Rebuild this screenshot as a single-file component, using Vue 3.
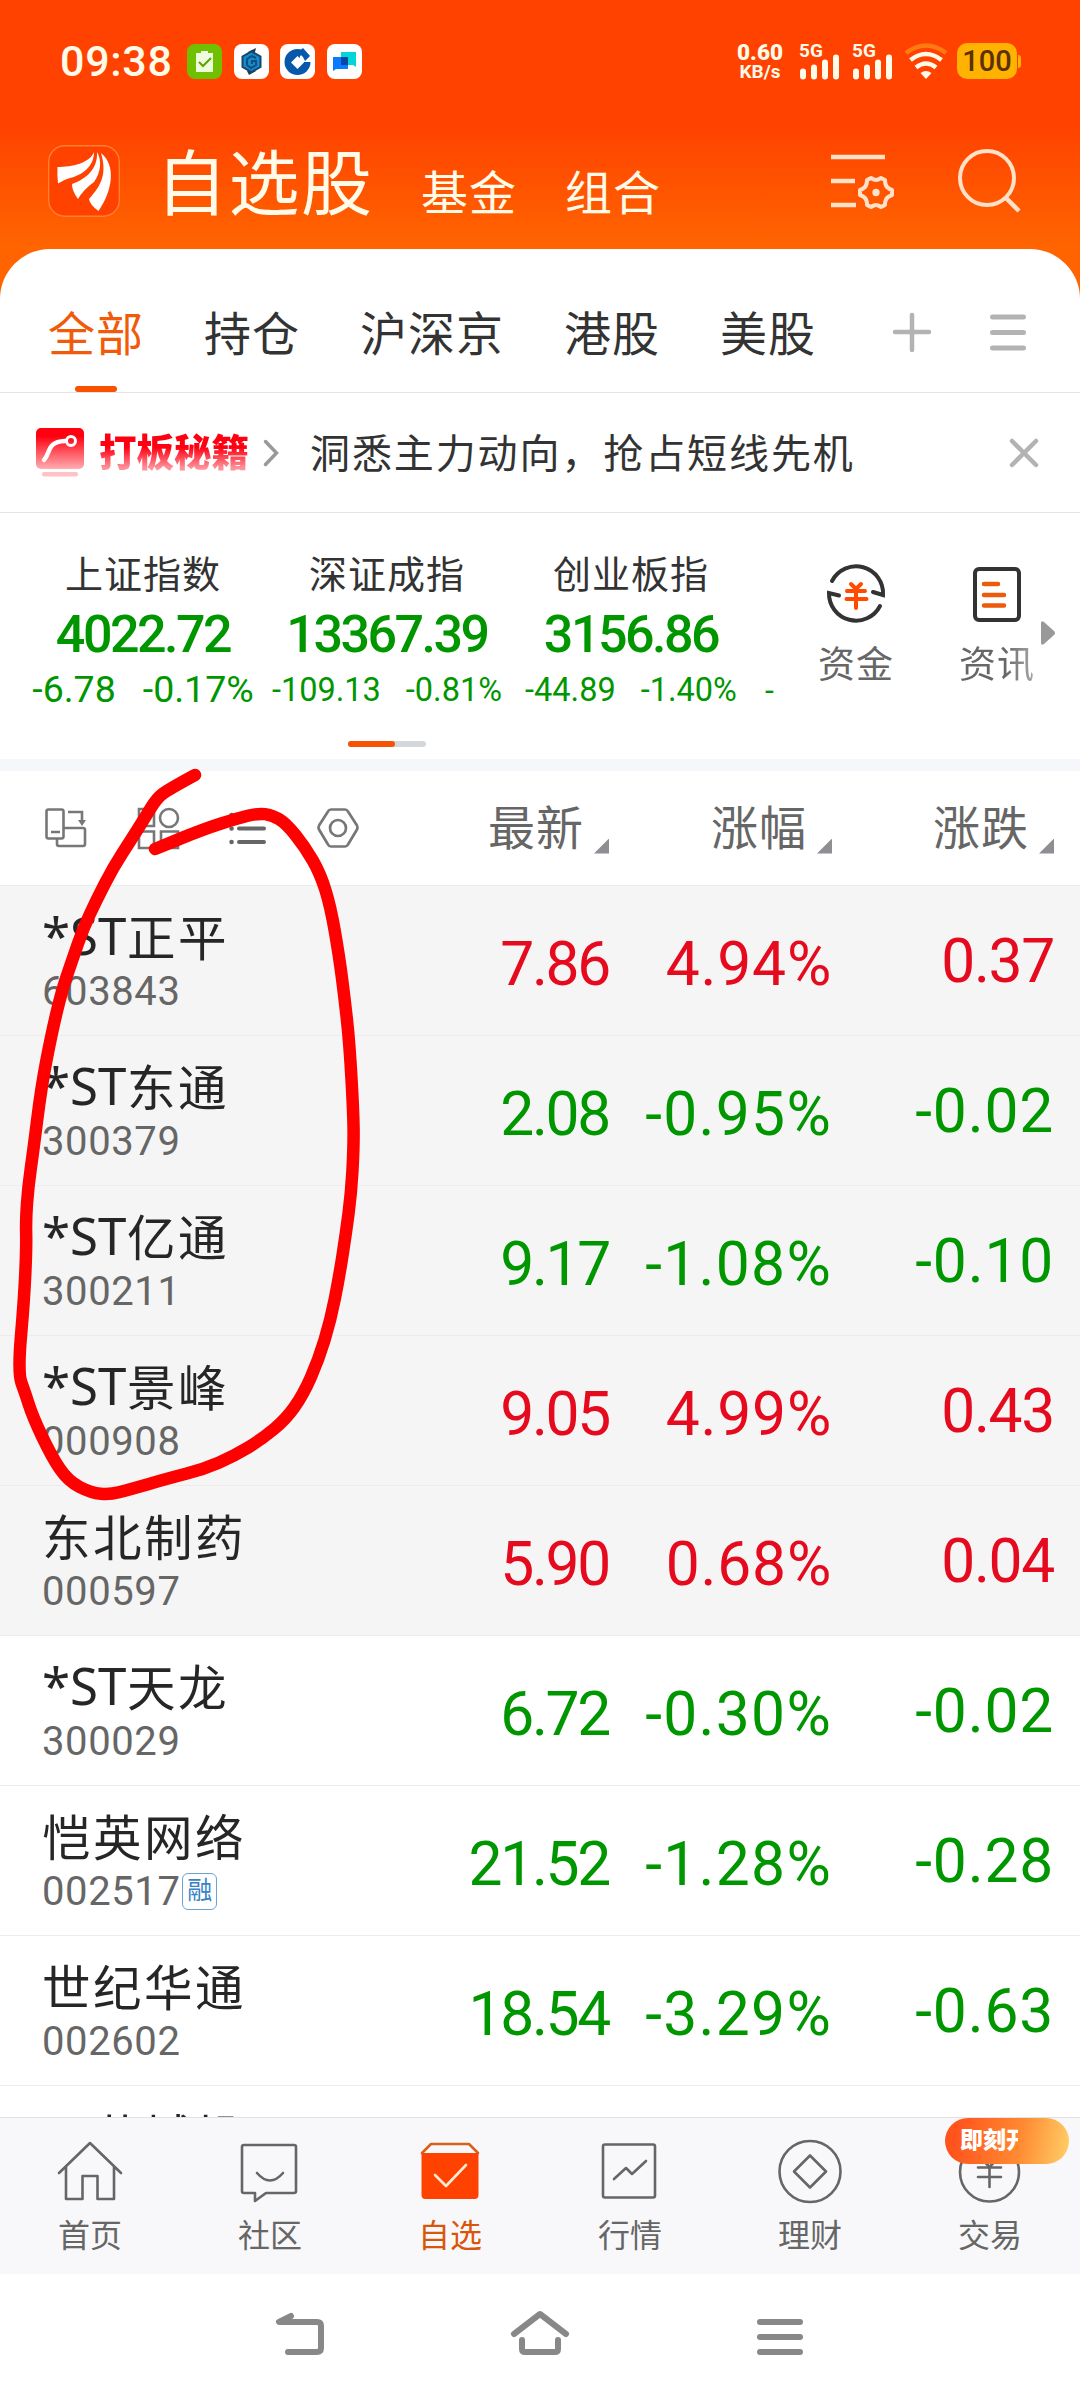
<script setup>
  import { ref, computed } from 'vue';

  const headerTabs = ['基金', '组合'];
  const groups = ['全部', '持仓', '沪深京', '港股', '美股'];
  const activeGroup = ref('全部');

  const indices = [
    { name: '上证指数', value: '4022.72', change: '-6.78', percent: '-0.17%', large: true },
    { name: '深证成指', value: '13367.39', change: '-109.13', percent: '-0.81%' },
    { name: '创业板指', value: '3156.86', change: '-44.89', percent: '-1.40%' }
  ];

  const columns = ['最新', '涨幅', '涨跌'];

  const stocks = [
    { st: true, name: '正平', code: '603843', price: '7.86', percent: '4.94%', change: '0.37', pinned: true },
    { st: true, name: '东通', code: '300379', price: '2.08', percent: '-0.95%', change: '-0.02', pinned: true },
    { st: true, name: '亿通', code: '300211', price: '9.17', percent: '-1.08%', change: '-0.10', pinned: true },
    { st: true, name: '景峰', code: '000908', price: '9.05', percent: '4.99%', change: '0.43', pinned: true },
    { name: '东北制药', code: '000597', price: '5.90', percent: '0.68%', change: '0.04', pinned: true },
    { st: true, name: '天龙', code: '300029', price: '6.72', percent: '-0.30%', change: '-0.02' },
    { name: '恺英网络', code: '002517', price: '21.52', percent: '-1.28%', change: '-0.28', tag: '融' },
    { name: '世纪华通', code: '002602', price: '18.54', percent: '-3.29%', change: '-0.63' },
    { name: '西藏城投' }
  ];

  const trend = (stock) => (stock.change?.startsWith('-') ? 'down' : 'up');

  const navItems = [
    { key: 'home', label: '首页' },
    { key: 'chat', label: '社区' },
    { key: 'watch', label: '自选' },
    { key: 'market', label: '行情' },
    { key: 'wealth', label: '理财' },
    { key: 'trade', label: '交易' }
  ];
  const activeNav = ref('watch');

  // Hand drawn marker, smoothed through the midpoints
  const marker = [
    [195, 775], [168.7, 789.3], [156.7, 798.3], [144.6, 818.3], [130.9, 840], [113.6, 866.7], [96.4, 900],
    [82.6, 930], [72.3, 960], [62, 990], [51.7, 1033], [41.3, 1087], [33.4, 1150], [28.2, 1186.7],
    [25.8, 1220], [26.5, 1246.7], [24.1, 1300], [17.8, 1373], [25.2, 1393], [32.7, 1416.7], [51.7, 1456.7],
    [68, 1481], [91.3, 1493], [110.2, 1494.6], [127.4, 1490], [168.7, 1478.3], [203.2, 1469.3],
    [234.2, 1456], [261.7, 1439.3], [285.8, 1419.3], [303, 1395], [318.5, 1360], [330.6, 1320],
    [339.2, 1276.7], [346, 1233], [351.2, 1193], [353.6, 1150], [353.6, 1117], [349.5, 1043],
    [344.4, 996.7], [339.2, 956.7], [330.6, 906.7], [320.2, 873.3], [304.8, 846.7], [286, 823.3],
    [272, 815], [258, 813.3], [237.6, 818.3], [203.2, 829.3], [155, 849]
  ];
  const markerPath = computed(() => {
    let d = `M${marker[0]}`;
    for (let i = 1; i < marker.length - 1; i++) {
      const [x, y] = marker[i];
      const [nx, ny] = marker[i + 1];
      d += ` Q${x} ${y} ${(x + nx) / 2} ${(y + ny) / 2}`;
    }
    return `${d} L${marker[marker.length - 1]}`;
  });
</script>

<template>
  <div class="phone">
    <div class="hero">
      <div class="status">
        <span class="clock">09:38</span>
        <div class="apps">
          <svg class="app" viewBox="0 0 35 35">
            <rect width="35" height="35" rx="8" fill="#6fc000" />
            <path d="M9 9h5V7h7v2h5v19H9z" fill="#eefbdc" />
            <path d="M12 18l4 4 8-8" fill="none" stroke="#5da300" stroke-width="2" />
          </svg>
          <svg class="app" viewBox="0 0 35 35">
            <rect width="35" height="35" rx="8" fill="#fff" />
            <path d="M14 8l8-4-1 4zM13 27l2 4 7-4z" fill="#263846" />
            <path d="M17.500 7.500l9 5v10.500l-9 5-9-5V12.500z" fill="#128bd0" stroke="#174568" stroke-width="2" />
            <path d="M22 14l-4-2-5 3v6l4 3 5-3v-4h-4v3" fill="none" stroke="#124e78" stroke-width="2" />
          </svg>
          <svg class="app" viewBox="0 0 35 35">
            <rect width="35" height="35" rx="8" fill="#fff" />
            <circle cx="17.500" cy="18" r="13" fill="#0757ab" />
            <path d="M17.500 12l6.500 6.500-6.500 6.500-6.500-6.500z" fill="#fff" />
            <path d="M19 18h12v-5l-5-5-6 4z" fill="#fff" />
            <path d="M18 8l5-4 7 8-5 5-2-4z" fill="#0757ab" />
          </svg>
          <svg class="app" viewBox="0 0 35 35">
            <rect width="35" height="35" rx="8" fill="#fff" />
            <path d="M14 8h15v15l-3-2H14z" fill="#00d5d8" />
            <path d="M6 13h15v12H9l-3 2z" fill="#087cff" />
            <path d="M14 13h7v8h-7z" fill="#0547a8" />
          </svg>
        </div>
        <div class="speed"><b>0.60</b><i>KB/s</i></div>
        <div v-for="n in 2" :key="n" class="signal">
          <b>5G</b>
          <svg viewBox="0 0 40 26" width="40" height="26">
            <path d="M4 17.500v5M15 13.500v9M26 8.500v14M37 3.500v19" stroke="#fffbe8" stroke-width="6" stroke-linecap="round" />
          </svg>
        </div>
        <svg class="wifi" viewBox="0 0 44 38" width="44" height="38">
          <g fill="none" stroke-width="4.500">
            <path d="M2 11q20-15 40 0" stroke="#ff7a10" />
            <path d="M6.500 18q15.500-12 31 0M12 25.500q10-8 20 0" stroke="#fffbe8" />
          </g>
          <path d="M16.500 31q5.500-4 11 0L22 37z" fill="#fffbe8" />
        </svg>
        <div class="battery">100</div>
      </div>

      <header class="header">
        <svg class="logo" viewBox="0 0 72 72">
          <rect x=".7" y=".7" width="70.600" height="70.600" rx="16" fill="#ff4200" stroke="#ff8030" stroke-width="1.400" />
          <g fill="#fff">
            <path d="M9.500 22C24 22 42 18 46 7C46 22 34 30 22 33Q15 35 10 38.500Q9 30 9.500 22z" />
            <path d="M49 7C54 15 53 27 46 37Q35 45 30 54Q24 46 24 39C38 34 50 24 49 7z" />
            <path d="M53 8C68 20 65 45 50.500 66Q42 60 41 54C54 40 59 28 53 8z" />
          </g>
        </svg>
        <h1>自选股</h1>
        <span v-for="tab in headerTabs" :key="tab" class="header-tab">{{ tab }}</span>
        <svg class="list-setting" viewBox="0 0 56 56" width="56" height="56">
          <path d="M1 5h54M1 29h24M1 53h25" fill="none" stroke="#ffe0c8" stroke-width="4.500" />
          <path
            d="M41 26Q44 28 46 28Q48 28 51 26L55 28Q55 33 57 35Q59 37 62 38V43Q59 44 57 46Q55 48 55 53L51 55Q48 53 46 53Q44 53 41 55L37 53Q37 48 35 46Q33 44 30 43V38Q33 37 35 35Q37 33 37 28z"
            fill="none" stroke="#ffe0c8" stroke-width="4" stroke-linejoin="round"
          />
          <circle cx="46" cy="40.500" r="3.700" fill="#ffe0c8" />
        </svg>
        <svg class="search" viewBox="0 0 66 66" width="66" height="66">
          <circle cx="30" cy="30" r="27" fill="none" stroke="#ffe0c8" stroke-width="4" />
          <path d="M48 49L62 63" stroke="#ffe0c8" stroke-width="4.500" />
        </svg>
      </header>
    </div>

    <main class="sheet">
      <nav class="groups">
        <span v-for="group in groups" :key="group" class="group" :class="{ active: group === activeGroup }">{{ group }}</span>
        <svg class="plus" viewBox="0 0 40 40" width="40" height="40">
          <path d="M20 3v35M3 20h34" stroke="#b3b3b3" stroke-width="4.500" stroke-linecap="round" />
        </svg>
        <svg class="menu" viewBox="0 0 36 40" width="36" height="40">
          <path d="M2.500 5h31M2.500 20.500h31M2.500 36h31" stroke="#b3b3b3" stroke-width="5" stroke-linecap="round" />
        </svg>
      </nav>

      <div class="banner">
        <svg class="banner-icon" viewBox="0 0 48 49" width="48" height="49">
          <defs>
            <linearGradient id="redFade" x1="0" y1="0" x2="0" y2="1">
              <stop offset=".2" stop-color="#ff0010" />
              <stop offset="1" stop-color="#ffadb2" />
            </linearGradient>
          </defs>
          <rect width="48" height="41" rx="5" fill="url(#redFade)" />
          <path d="M8 32C15 25 10 14 29 13" fill="none" stroke="#fff" stroke-width="4.500" stroke-linecap="round" />
          <circle cx="35" cy="13" r="4.500" fill="none" stroke="#fff" stroke-width="3" />
          <rect x="6" y="44" width="36" height="4.500" rx="2" fill="#ffc2c5" />
        </svg>
        <b class="banner-brand">打板秘籍</b>
        <svg class="chevron" viewBox="0 0 16 30" width="16" height="30">
          <path d="M2.500 3.500L13.500 15L2.500 26.500" fill="none" stroke="#999" stroke-width="3.500" stroke-linecap="round" />
        </svg>
        <span class="banner-text">洞悉主力动向，抢占短线先机</span>
        <svg class="close" viewBox="0 0 30 30" width="30" height="30">
          <path d="M3 3l24 24M27 3L3 27" stroke="#b3b3b3" stroke-width="4.500" stroke-linecap="round" />
        </svg>
      </div>

      <section class="overview">
        <div class="overview-main">
          <div class="indices">
            <div v-for="item in indices" :key="item.name" class="index">
              <span class="index-name">{{ item.name }}</span>
              <b class="index-value">{{ item.value }}</b>
              <div class="index-change" :class="{ large: item.large }">
                <span>{{ item.change }}</span><span>{{ item.percent }}</span>
              </div>
            </div>
            <span class="next-index">-</span>
          </div>
          <div class="tool">
            <svg viewBox="0 0 60 60" width="60" height="60">
              <g fill="none" stroke="#333" stroke-width="4" stroke-linecap="round">
                <path d="M6 17A27 27 0 0 1 57 31L47 28M54 42A27 27 0 0 1 3 29L13 31.500" />
              </g>
              <path d="M25 20l5 5 5-5M30 25v19M21 27h18M20.500 35h20" fill="none" stroke="#ff4a00" stroke-width="4" stroke-linecap="round" />
            </svg>
            <span>资金</span>
          </div>
          <div class="tool news">
            <svg viewBox="0 0 60 60" width="60" height="60">
              <rect x="8" y="5" width="44" height="51" rx="4" fill="none" stroke="#333" stroke-width="4" />
              <path d="M17 20h14M17 31h20M17 41.500h20" stroke="#ec5a0c" stroke-width="4.500" stroke-linecap="round" />
            </svg>
            <span>资讯</span>
          </div>
          <svg class="more" viewBox="0 0 16 26" width="16" height="26">
            <path d="M1 3q0-3 3-1l10 9q2 2 0 4L4 24q-3 2-3-1z" fill="#999" />
          </svg>
        </div>
        <div class="pager"><span></span></div>
      </section>

      <section class="table">
        <div class="row table-head">
          <div class="view-icons">
            <svg viewBox="0 0 42 40" width="42" height="40">
              <g fill="none" stroke="#777" stroke-width="2.600">
                <rect x="1.500" y="1.500" width="17" height="29" rx="2" />
                <path d="M12 31v5q0 2 2 2h24q2 0 2-2V22q0-2-2-2H19M23 4h14v10M6 24h9" />
              </g>
              <path d="M33 12h8l-4 6z" fill="#777" />
            </svg>
            <svg viewBox="0 0 42 42" width="42" height="42">
              <g fill="none" stroke="#777" stroke-width="2.600">
                <path d="M2 2h15v17H2zM2 24.500h15V41H2zM24 24.500h17V41H24z" />
                <circle cx="32" cy="11" r="9" />
              </g>
            </svg>
            <svg viewBox="0 0 38 34" width="38" height="34">
              <path d="M10 4h25M10 17.500h25M10 31h25" stroke="#666" stroke-width="4" stroke-linecap="round" />
              <path d="M2.500 4h.1M2.500 17.500h.1M2.500 31h.1" stroke="#666" stroke-width="4.500" stroke-linecap="round" />
            </svg>
            <svg viewBox="0 0 42 40" width="42" height="40">
              <g fill="none" stroke="#777" stroke-width="2.700" stroke-linejoin="round">
                <path d="M14 1.500h14q2 0 3 2l9 14q1 2 0 4l-9 15q-1 2-3 2H14q-2 0-3-2l-9-15q-1-2 0-4l9-14q1-2 3-2z" />
                <circle cx="21" cy="20" r="8" />
              </g>
            </svg>
          </div>
          <span v-for="column in columns" :key="column" class="column"><span>{{ column }}</span><i class="sort"></i></span>
        </div>

        <div v-for="stock in stocks" :key="stock.name" class="row stock" :class="[trend(stock), { pinned: stock.pinned }]">
          <div class="stock-info">
            <div class="stock-name"><span v-if="stock.st" class="st">*ST</span>{{ stock.name }}</div>
            <div class="stock-code">{{ stock.code }}<span v-if="stock.tag" class="tag">{{ stock.tag }}</span></div>
          </div>
          <span class="number price">{{ stock.price }}</span>
          <span class="number percent">{{ stock.percent }}</span>
          <span class="number change">{{ stock.change }}</span>
        </div>
      </section>
    </main>

    <nav class="bottom-nav">
      <div v-for="item in navItems" :key="item.key" class="nav-item" :class="{ active: item.key === activeNav }">
        <svg viewBox="0 0 66 66" width="66" height="66" fill="none" stroke="#666" stroke-width="2.600" stroke-linecap="round" stroke-linejoin="round">
          <path v-if="item.key === 'home'" d="M2 34L33 4l31 30M9 28v32h16.500V37h15v23H57V28" />
          <template v-else-if="item.key === 'chat'">
            <path d="M7 6h50q2 0 2 2v44q0 2-2 2H29l-11 8V54H7q-2 0-2-2V8q0-2 2-2z" />
            <path d="M20 34q13 15 26 0" />
          </template>
          <template v-else-if="item.key === 'watch'">
            <path d="M5 14L14 5h38l9 9" stroke="#d8601c" />
            <path d="M4.500 14h57v42q0 4-4 4h-49q-4 0-4-4z" fill="#ff4200" stroke="none" />
            <path d="M18 36l11 11 20-21" stroke="#ffecd0" />
          </template>
          <template v-else-if="item.key === 'market'">
            <rect x="6" y="5.500" width="52" height="53" rx="2" />
            <path d="M17 40l12-11 6 6 14-13" />
          </template>
          <template v-else-if="item.key === 'wealth'">
            <circle cx="33" cy="32.500" r="30.500" />
            <path d="M33 16.500l16 16-16 16-16-16z" />
          </template>
          <template v-else>
            <circle cx="32.500" cy="33" r="29.500" />
            <path d="M22 17l10.500 11L43 17M32.500 28v20M21 28.500h23M21 38h23" />
          </template>
        </svg>
        <span>{{ item.label }}</span>
        <div v-if="item.key === 'trade'" class="promo"><span>即刻开</span></div>
      </div>
    </nav>

    <div class="system-bar">
      <svg viewBox="0 0 50 48" width="50" height="48">
        <path d="M16 7L4 13h38q4 0 4 4v22q0 4-4 4H13" />
      </svg>
      <svg viewBox="0 0 60 48" width="60" height="48">
        <path d="M4 25L30 5l26 20M12 31v9q0 3 3 3h30q3 0 3-3v-9" />
      </svg>
      <svg viewBox="0 0 50 48" width="50" height="48">
        <path d="M5 13h40M5 28h40M5 43h40" />
      </svg>
    </div>

    <svg class="marker" viewBox="0 0 1080 2400" width="1080" height="2400">
      <path :d="markerPath" />
    </svg>
  </div>
</template>

<style>
body {
  margin: 0;
  background: #fff;
}
</style>

<style scoped>
.phone {
  position: relative;
  width: 1080px;
  height: 2400px;
  overflow: hidden;
  display: flex;
  flex-direction: column;
  background: #fff;
  color: #333;
  font-family: Roboto, 'Noto Sans CJK SC', sans-serif;
  white-space: nowrap;
}
svg {
  display: block;
  flex-shrink: 0;
  overflow: visible;
}
b, i {
  font-style: normal;
}

/* status bar + header */
.hero {
  height: 320px;
  margin-bottom: -71px;
  flex-shrink: 0;
  background: linear-gradient(#ff4200 125px, #ff6400 245px);
}
.status {
  display: flex;
  align-items: center;
  height: 122px;
  padding: 0 63px 0 60px;
  box-sizing: border-box;
  color: #fffbe8;
}
.clock {
  width: 127px;
  font-size: 43px;
  font-weight: 500;
  letter-spacing: .7px;
}
.apps {
  display: flex;
  gap: 11.500px;
  margin-right: auto;
}
.app {
  width: 35px;
  height: 35px;
}
.speed {
  display: flex;
  flex-direction: column;
  align-items: center;
  width: 46px;
  margin-right: 16px;
  padding-top: 1px;
  line-height: 20px;
  font-weight: 700;
}
.speed b {
  font-size: 22.500px;
}
.speed i {
  font-size: 19px;
}
.signal {
  display: flex;
  flex-direction: column;
  width: 40px;
  height: 36px;
  margin-right: 13px;
}
.signal b {
  height: 11px;
  font-size: 19px;
  line-height: 15px;
}
.wifi {
  margin-right: 9px;
  margin-left: -1px;
}
.battery {
  width: 60px;
  height: 36px;
  border-radius: 10px;
  background: #ffb300;
  color: #5a3200;
  font-size: 29px;
  font-weight: 500;
  line-height: 37px;
  text-align: center;
}
.battery::after {
  content: '';
  position: absolute;
  width: 3px;
  height: 13px;
  margin: 12px 0 0 6px;
  border-radius: 0 3px 3px 0;
  background: #ffb300;
}
.header {
  display: flex;
  height: 127px;
  padding-left: 48px;
}
.logo {
  width: 72px;
  height: 72px;
  margin-top: 23px;
}
.header h1 {
  margin: 13px 0 0 36px;
  width: 265px;
  color: #fffbe8;
  font-size: 71px;
  font-weight: 400;
  line-height: 100px;
  letter-spacing: 1.500px;
}
.header-tab {
  width: 144px;
  padding-top: 40px;
  color: #fffbe8;
  font-size: 47px;
  line-height: 64px;
  letter-spacing: 1px;
}
.list-setting {
  margin: 30px 0 0 121px;
}
.search {
  margin: 26px 0 0 71px;
}

/* sheet */
.sheet {
  flex: 1;
  min-height: 0;
  overflow: hidden;
  border-radius: 50px 50px 0 0;
  background: #fff;
}
.groups {
  display: flex;
  align-items: center;
  gap: 60px;
  height: 144px;
  box-sizing: border-box;
  padding: 0 54px 0 48px;
  border-bottom: 1px solid #e3e3e3;
}
.group {
  display: flex;
  flex-direction: column;
  align-items: center;
  height: 143px;
  box-sizing: border-box;
  padding-top: 51px;
  font-size: 47px;
  line-height: 70px;
  letter-spacing: 1px;
}
.group.active {
  color: #f05a08;
}
.group.active::after {
  content: '';
  width: 42px;
  height: 6px;
  margin-top: 16px;
  border-radius: 3px;
  background: #fa5000;
}
.plus {
  margin: 22px 0 0 16px;
}
.menu {
  margin: 22px 0 0 -2px;
}
.banner {
  display: flex;
  align-items: center;
  height: 120px;
  box-sizing: border-box;
  padding: 0 41px 0 36px;
  border-bottom: 1px solid #e3e3e3;
}
.banner-brand {
  margin-left: 15px;
  width: 149px;
  background: linear-gradient(#ff0012 40%, #ff8f98 76%);
  background-clip: text;
  -webkit-background-clip: text;
  color: transparent;
  font-size: 37.500px;
  font-weight: 900;
  line-height: 56px;
}
.chevron {
  margin-left: 15px;
}
.banner-text {
  margin-left: 31px;
  padding-bottom: 4px;
  font-size: 40px;
  letter-spacing: 1.900px;
}
.close {
  margin-left: auto;
}

/* index overview */
.overview {
  height: 246px;
  border-bottom: 12px solid #f6f7fa;
}
.overview-main {
  display: flex;
  height: 228px;
}
.indices {
  display: flex;
  width: 756px;
  padding-left: 21px;
  color: #009600;
}
.index {
  display: flex;
  flex-direction: column;
  align-items: center;
  width: 244px;
  flex-shrink: 0;
}
.index-name {
  margin-top: 35px;
  color: #333;
  font-size: 38px;
  line-height: 54px;
  letter-spacing: 1px;
}
.index-value {
  font-size: 52px;
  font-weight: 500;
  line-height: 62px;
  margin-top: 2px;
  letter-spacing: -2.500px;
}
.index-change {
  display: flex;
  gap: 25px;
  margin-top: -6px;
  font-size: 32.500px;
  line-height: 60px;
}
.index-change.large {
  gap: 27px;
  font-size: 37.500px;
  line-height: 58px;
}
.next-index {
  padding: 147px 0 0 12px;
  font-size: 32px;
  line-height: 60px;
}
.tool {
  display: flex;
  flex-direction: column;
  align-items: center;
  gap: 15px;
  width: 142px;
  margin-left: 8px;
  padding-top: 51px;
  color: #666;
  font-size: 37px;
  line-height: 54px;
  letter-spacing: 1px;
}
.tool.news {
  margin-left: -1px;
}
.tool.news span {
  background: linear-gradient(90deg, #666 60%, #aaa);
  background-clip: text;
  -webkit-background-clip: text;
  color: transparent;
}
.more {
  margin: 107px 0 0 -28px;
}
.pager {
  width: 78px;
  height: 6px;
  margin-left: 348px;
  border-radius: 3px;
  background: #d3d7da;
}
.pager span {
  display: block;
  width: 47px;
  height: 6px;
  border-radius: 3px;
  background: #f55208;
}

/* stock table */
.row {
  display: grid;
  grid-template-columns: 394px 215px 223px 222px;
  box-sizing: border-box;
}
.table-head {
  height: 114px;
  align-items: center;
  color: #666;
}
.view-icons {
  display: flex;
  align-items: center;
  padding-left: 45px;
  gap: 50px;
}
.column {
  display: flex;
  justify-content: flex-end;
  align-items: center;
  font-size: 47px;
  letter-spacing: 1px;
}
.column span {
  padding-bottom: 7px;
}
.sort {
  width: 15px;
  height: 15px;
  margin: 36px 0 0 10px;
  background: #8e8e93;
  clip-path: polygon(100% 0, 100% 100%, 0 100%);
}
.stock {
  height: 150px;
  border-top: 1px solid #ececec;
}
.stock.pinned {
  background: #f5f5f5;
}
.stock-info {
  padding: 15px 0 0 42px;
}
.stock-name {
  display: flex;
  align-items: center;
  height: 68px;
  color: #262626;
  font-size: 48.500px;
  letter-spacing: 2.500px;
}
.st {
  width: 85px;
  font-family: 'Noto Sans', sans-serif;
  font-size: 51px;
  letter-spacing: 0;
}
.stock-code {
  display: flex;
  align-items: center;
  height: 36px;
  margin-top: 4px;
  color: #666;
  font-size: 40px;
  letter-spacing: .6px;
}
.tag {
  width: 33px;
  height: 35px;
  margin-left: 2px;
  border: 1.500px solid #6ba3d0;
  border-radius: 6px;
  color: #3884c4;
  font-size: 25px;
  line-height: 34px;
  text-align: center;
}
.number {
  padding-top: 43px;
  color: #009600;
  font-size: 60.500px;
  line-height: 72px;
  text-align: right;
}
.up .number {
  color: #e60a1e;
}
.number.price {
  letter-spacing: -2.300px;
}
.number.percent {
  letter-spacing: .8px;
}
.down .percent {
  letter-spacing: 1.300px;
}
.number.change {
  padding-top: 40px;
}
.up .change {
  letter-spacing: -1.300px;
}
.down .change {
  letter-spacing: .8px;
}

/* bottom navigation */
.bottom-nav {
  display: grid;
  grid-template-columns: repeat(6, 180px);
  height: 157px;
  box-sizing: border-box;
  flex-shrink: 0;
  border-top: 1px solid #e2e2e4;
  background: #f8f8fa;
}
.nav-item {
  position: relative;
  display: flex;
  flex-direction: column;
  align-items: center;
  padding-top: 21px;
  color: #666;
  font-size: 32px;
  line-height: 44px;
}
.nav-item > span {
  margin-top: 9px;
}
.nav-item.active {
  color: #d8560c;
}
.promo {
  position: absolute;
  top: 0;
  left: 45px;
  width: 124px;
  height: 46px;
  box-sizing: border-box;
  padding-left: 15px;
  border-radius: 23px;
  background: linear-gradient(100deg, #ff541c 10%, #ff8a32 60%, #ffd068);
}
.promo span {
  display: block;
  width: 58px;
  overflow: hidden;
  color: #fff;
  font-size: 23px;
  font-weight: 900;
  line-height: 46px;
}
.system-bar {
  display: flex;
  justify-content: space-between;
  height: 126px;
  box-sizing: border-box;
  flex-shrink: 0;
  padding: 35px 275px 0 275px;
}
.system-bar path {
  fill: none;
  stroke: #888;
  stroke-width: 6;
  stroke-linecap: round;
  stroke-linejoin: round;
}

/* marker drawn over the list */
.marker {
  position: absolute;
  top: 0;
  left: 0;
}
.marker path {
  fill: none;
  stroke: #fe0000;
  stroke-width: 12.500;
  stroke-linecap: round;
  stroke-linejoin: round;
}
</style>
